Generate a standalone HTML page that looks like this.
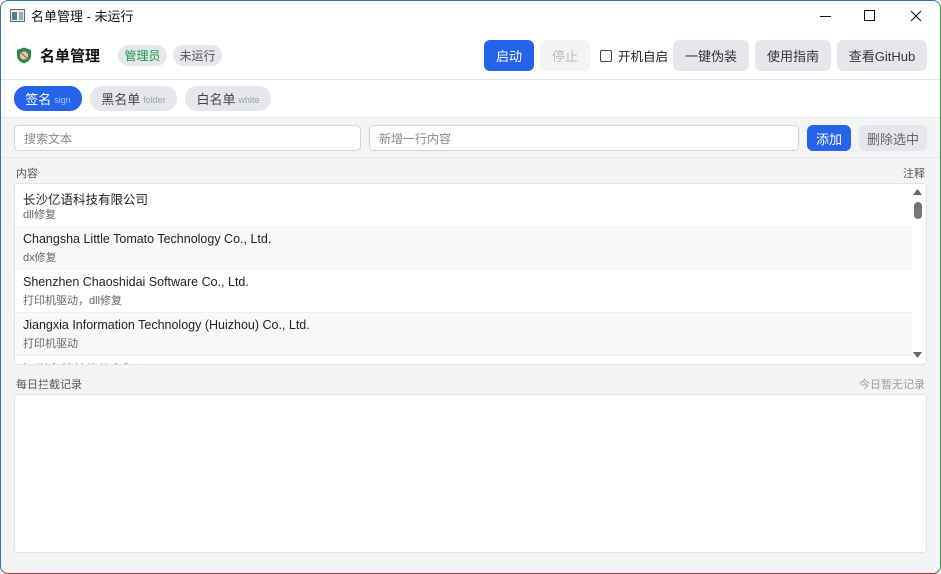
<!DOCTYPE html>
<html><head><meta charset="utf-8"><style>
*{box-sizing:border-box;margin:0;padding:0}
body{width:941px;height:574px;overflow:hidden;font-family:"Liberation Sans","Noto Sans CJK SC",sans-serif;background:#fff;position:relative;color:#111}
.win{position:absolute;inset:0;overflow:hidden;background:#fff}
.frame{position:absolute;inset:0;border:1px solid #3a6fb0;border-right-color:#2a9a3a;border-bottom-color:#a03030;border-radius:8px;pointer-events:none}
.a{position:absolute}
.btn{position:absolute;border-radius:6px;font-size:13px;display:flex;align-items:center;justify-content:center;background:#e5e7eb;color:#333}
.pill{position:absolute;border-radius:12px;font-size:13px;display:flex;align-items:center;justify-content:center;background:#e5e7eb;color:#444}
.blue,.pill.blue,.btn.blue{background:#2563eb;color:#fff}
.pill small{font-size:9px;color:#9aa0a8;margin-left:3px;margin-top:3px}
.inp{position:absolute;background:#fff;border:1px solid #d1d5db;border-radius:5px;font-size:12px;color:#888;padding-left:9px;display:flex;align-items:center}
.row{position:absolute;left:0;width:897px;height:43px;border-bottom:1px solid #eef0f3}
.row .t{position:absolute;left:8px;top:5px;font-size:12.5px;color:#222}
.row .s{position:absolute;left:8px;top:22px;font-size:11px;color:#666}
</style></head><body><div class="win">
<svg class="a" style="left:10px;top:9px" width="15" height="13"><rect x=".5" y=".5" width="14" height="12" fill="#e8ecef" stroke="#667"/><rect x="2" y="3" width="5" height="8" fill="#5a7a8a"/><rect x="9" y="3" width="4" height="8" fill="#9ab"/></svg>
<div class="a" style="left:31px;top:6px;font-size:13px">名单管理 - 未运行</div>
<div class="a" style="left:820px;top:16px;width:11px;height:1px;background:#111"></div>
<div class="a" style="left:864px;top:10px;width:11px;height:11px;border:1px solid #111"></div>
<svg class="a" style="left:910px;top:10px" width="12" height="12"><path d="M1 1L11 11M11 1L1 11" stroke="#111" stroke-width="1.1"/></svg>
<svg class="a" style="left:16px;top:47px" width="16" height="17" viewBox="0 0 16 17"><path d="M8 0.5L15 3V8.5C15 12.5 12 15 8 16.5C4 15 1 12.5 1 8.5V3Z" fill="#2f8a4a"/><circle cx="8" cy="8.5" r="4" fill="#f2c8b8"/><path d="M5.5 6L10.5 11" stroke="#c05050" stroke-width="1.2"/></svg>
<div class="a" style="left:40px;top:45px;font-size:15px;font-weight:bold;color:#111">名单管理</div>
<div class="pill" style="left:118px;top:45px;width:49px;height:21px;font-size:12px;color:#1a9a4a">管理员</div>
<div class="pill" style="left:173px;top:45px;width:49px;height:21px;font-size:12px;color:#555">未运行</div>
<div class="btn blue" style="left:484px;top:40px;width:50px;height:31px">启动</div>
<div class="btn" style="left:540px;top:40px;width:50px;height:31px;background:#f3f4f6;color:#bbb">停止</div>
<div class="a" style="left:600px;top:50px;width:12px;height:12px;border:1px solid #444;border-radius:2px"></div>
<div class="a" style="left:618px;top:46px;font-size:12.5px;color:#222">开机自启</div>
<div class="btn" style="left:673px;top:40px;width:76px;height:31px">一键伪装</div>
<div class="btn" style="left:755px;top:40px;width:76px;height:31px">使用指南</div>
<div class="btn" style="left:837px;top:40px;width:90px;height:31px">查看GitHub</div>
<div class="a" style="left:0;top:79px;width:941px;height:1px;background:#e5e7eb"></div>
<div class="pill blue" style="left:14px;top:86px;width:68px;height:25px">签名<small style="color:#aac4f8">sign</small></div>
<div class="pill" style="left:90px;top:86px;width:87px;height:25px">黑名单<small>folder</small></div>
<div class="pill" style="left:185px;top:86px;width:86px;height:25px">白名单<small>white</small></div>
<div class="a" style="left:0;top:117px;width:941px;height:457px;background:#f3f4f6;border-top:1px solid #e5e7eb"></div>
<div class="inp" style="left:14px;top:125px;width:347px;height:26px">搜索文本</div>
<div class="inp" style="left:369px;top:125px;width:430px;height:26px">新增一行内容</div>
<div class="btn blue" style="left:807px;top:125px;width:44px;height:26px">添加</div>
<div class="btn" style="left:859px;top:125px;width:68px;height:26px;color:#666">删除选中</div>
<div class="a" style="left:0;top:157px;width:941px;height:1px;background:#e5e7eb"></div>
<div class="a" style="left:16px;top:165px;font-size:11px;color:#555">内容</div>
<div class="a" style="right:16px;top:165px;font-size:11px;color:#555">注释</div>
<div class="a" style="left:14px;top:183px;width:913px;height:182px;background:#fff;border:1px solid #e0e3e7;border-radius:4px;overflow:hidden">
<div class="row" style="top:0;background:#fff"><div class="t">长沙亿语科技有限公司</div><div class="s">dll修复</div></div>
<div class="row" style="top:43px;background:#f8f9fb"><div class="t">Changsha Little Tomato Technology Co., Ltd.</div><div class="s">dx修复</div></div>
<div class="row" style="top:86px;background:#fff"><div class="t">Shenzhen Chaoshidai Software Co., Ltd.</div><div class="s">打印机驱动，dll修复</div></div>
<div class="row" style="top:129px;background:#f8f9fb"><div class="t">Jiangxia Information Technology (Huizhou) Co., Ltd.</div><div class="s">打印机驱动</div></div>
<div class="row" style="top:172px;background:#fff"><div class="t" style="top:3px">深圳市某某软件有限公司</div></div>
<svg class="a" style="left:898px;top:5px" width="9" height="6"><path d="M0 6L4.5 0L9 6Z" fill="#666"/></svg>
<div class="a" style="left:899px;top:18px;width:8px;height:17px;border-radius:4px;background:#777"></div>
<svg class="a" style="left:898px;top:168px" width="9" height="6"><path d="M0 0L4.5 6L9 0Z" fill="#666"/></svg>
</div>
<div class="a" style="left:16px;top:376px;font-size:11px;color:#555">每日拦截记录</div>
<div class="a" style="right:16px;top:376px;font-size:11px;color:#999">今日暂无记录</div>
<div class="a" style="left:14px;top:394px;width:913px;height:159px;background:#fff;border:1px solid #e0e3e7;border-radius:4px"></div>
</div><div class="frame"></div></body></html>
